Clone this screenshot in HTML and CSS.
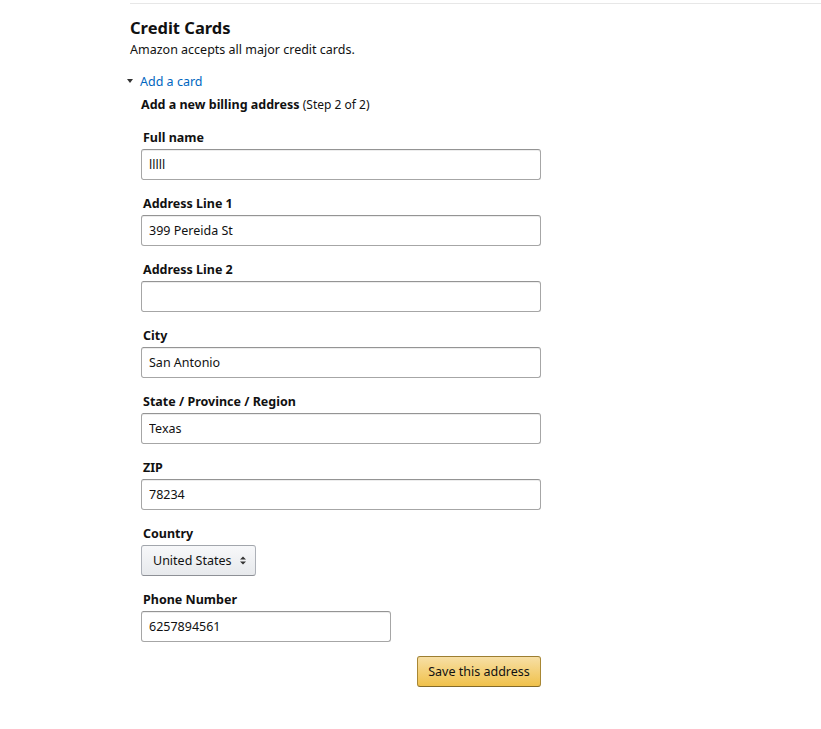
FILE: index.html
```html
<!DOCTYPE html>
<html>
<head>
<meta charset="utf-8">
<link rel="stylesheet" href="styles.css">
</head>
<body>
<div class="page">
  <div class="rule"></div>
  <h1 class="title">Credit Cards</h1>
  <p class="subtitle">Amazon accepts all major credit cards.</p>
  <div class="section">
    <div class="expander">
      <span class="caret"></span>
      <a class="link" href="#">Add a card</a>
    </div>
    <div class="step"><b>Add a new billing address</b> <span class="step-note">(Step 2 of 2)</span></div>
    <form class="form">
      <div class="field">
        <label class="label">Full name</label>
        <input class="input" type="text" value="lllll">
      </div>
      <div class="field">
        <label class="label">Address Line 1</label>
        <input class="input" type="text" value="399 Pereida St">
      </div>
      <div class="field">
        <label class="label">Address Line 2</label>
        <input class="input" type="text" value="">
      </div>
      <div class="field">
        <label class="label">City</label>
        <input class="input" type="text" value="San Antonio">
      </div>
      <div class="field">
        <label class="label">State / Province / Region</label>
        <input class="input" type="text" value="Texas">
      </div>
      <div class="field">
        <label class="label">ZIP</label>
        <input class="input" type="text" value="78234">
      </div>
      <div class="field">
        <label class="label">Country</label>
        <div class="select">
          <span>United States</span>
          <svg class="arrows" width="6" height="9" viewBox="0 0 6 9"><path d="M0 3.5 L3 0.5 L6 3.5 Z M0 5.5 L3 8.5 L6 5.5 Z" fill="#333"/></svg>
        </div>
      </div>
      <div class="field">
        <label class="label">Phone Number</label>
        <input class="input phone" type="text" value="6257894561">
      </div>
      <div class="actions">
        <button class="button" type="button">Save this address</button>
      </div>
    </form>
  </div>
</div>
</body>
</html>
```
FILE: styles.css
```css
html, body {
  margin: 0;
  padding: 0;
  background: #fff;
}
body {
  font-family: "Noto Sans", "Open Sans", Arial, sans-serif;
  font-size: 12.5px;
  color: #111;
}
.page {
  padding-left: 130px;
}
.rule {
  margin-top: 3px;
  height: 1px;
  background: #e7e7e7;
}
.title {
  margin: 12px 0 0;
  font-size: 16.5px;
  font-weight: 700;
  line-height: 24px;
}
.subtitle {
  margin: 0;
  line-height: 19px;
}
.section {
  padding-left: 11px;
}
.expander {
  margin-top: 13px;
  margin-left: -14px;
  display: flex;
  align-items: center;
  gap: 7px;
  line-height: 19px;
}
.caret {
  width: 0;
  height: 0;
  border-left: 3.5px solid transparent;
  border-right: 3.5px solid transparent;
  border-top: 4px solid #333;
  margin-top: -1px;
}
.link {
  color: #0066c0;
  text-decoration: none;
}
.step {
  margin-top: 4px;
  line-height: 19px;
}
.step b {
  font-weight: 700;
}
.step-note {
  font-size: 12px;
}
.form {
  width: 400px;
  margin-top: 13px;
}
.field {
  margin-bottom: 13px;
}
.label {
  display: block;
  padding-left: 2px;
  padding-top: 1px;
  font-weight: 700;
  line-height: 19px;
  margin-bottom: 2px;
}
.input {
  box-sizing: border-box;
  display: block;
  width: 400px;
  height: 31px;
  padding: 0 7px;
  border: 1px solid #a6a6a6;
  border-top-color: #949494;
  border-radius: 3px;
  box-shadow: 0 1px 0 rgba(255,255,255,.5), 0 1px 0 rgba(0,0,0,.07) inset;
  font-family: inherit;
  font-size: 12.5px;
  color: #111;
  background: #fff;
  outline: none;
}
.input.phone {
  width: 250px;
}
.select {
  box-sizing: border-box;
  width: 115px;
  height: 31px;
  display: flex;
  align-items: center;
  justify-content: space-between;
  padding: 0 9px 0 11px;
  border: 1px solid #adb1b8;
  border-top-color: #a2a6ac;
  border-bottom-color: #8d9096;
  border-radius: 3px;
  background: linear-gradient(to bottom, #f7f8fa, #e7e9ec);
  color: #111;
}
.arrows {
  display: block;
}
.actions {
  display: flex;
  justify-content: flex-end;
  padding-top: 1px;
}
.button {
  box-sizing: border-box;
  width: 124px;
  height: 31px;
  border: 1px solid #a88734;
  border-top-color: #9c7e31;
  border-bottom-color: #846a29;
  border-radius: 3px;
  background: linear-gradient(to bottom, #f7dfa5, #f0c14b);
  font-family: inherit;
  font-size: 12.5px;
  color: #111;
  padding: 0;
}
```
